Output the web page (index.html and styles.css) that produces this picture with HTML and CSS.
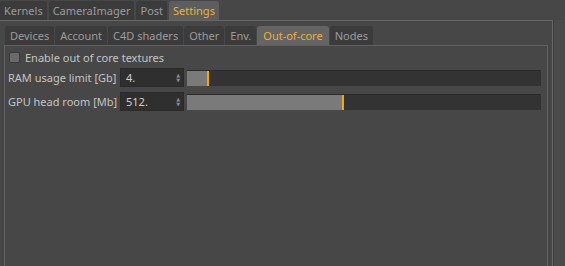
FILE: index.html
```html
<!DOCTYPE html>
<html lang="en">
<head>
	<meta charset="UTF-8">
	<title>Settings - Out-of-core</title>
	<link rel="stylesheet" href="styles.css">
</head>
<body>
	<div class="app">
		<div class="main">
			<div class="tabs">
				<div class="tab">Kernels</div>
				<div class="tab">CameraImager</div>
				<div class="tab">Post</div>
				<div class="tab active">Settings</div>
			</div>
			<div class="frame">
				<div class="subtabs">
					<div class="tab">Devices</div>
					<div class="tab">Account</div>
					<div class="tab">C4D shaders</div>
					<div class="tab">Other</div>
					<div class="tab">Env.</div>
					<div class="tab active">Out-of-core</div>
					<div class="tab">Nodes</div>
				</div>
				<div class="panel">
					<label class="check-row">
						<span class="checkbox"></span>
						Enable out of core textures
					</label>
					<div class="row">
						<span class="label">RAM usage limit [Gb]</span>
						<div class="field">
							<span>4.</span>
							<span class="spin">&#9650;<br>&#9660;</span>
						</div>
						<div class="slider">
							<div class="fill" style="width: 20px"></div>
						</div>
					</div>
					<div class="row">
						<span class="label">GPU head room [Mb]</span>
						<div class="field">
							<span>512.</span>
							<span class="spin">&#9650;<br>&#9660;</span>
						</div>
						<div class="slider">
							<div class="fill" style="width: 155px"></div>
						</div>
					</div>
				</div>
			</div>
		</div>
		<div class="scroll"></div>
	</div>
</body>
</html>
```

FILE: styles.css
```css
body {
	margin: 0;
	background: #474747;
	font-family: "Noto Sans", "DejaVu Sans", sans-serif;
	font-size: 11px;
	color: #c4c4c4;
}

.app { display: flex; width: 565px; height: 266px; overflow: hidden; }

.main { width: 553px; display: flex; flex-direction: column; }

.scroll {
	flex: 1;
	margin-top: 20px;
	border-left: 1px solid #3c3c3c;
	background: #4a4a4a;
}

.tabs { display: flex; gap: 2px; height: 20px; align-items: flex-end; }

.tab {
	height: 19px;
	line-height: 19px;
	padding: 0 4px;
	background: #3b3b3b;
	color: #9c9c9c;
	border-radius: 3px 3px 0 0;
	white-space: nowrap;
}

.tab.active { background: #5d5d5d; color: #f0b030; }

.frame {
	flex: 1;
	border-top: 1px solid #666;
	border-right: 1px solid #666;
	padding: 5px 4px 0 4px;
	display: flex;
	flex-direction: column;
}

.subtabs { display: flex; gap: 1px; height: 19px; padding-left: 1px; }

.subtabs .tab { padding: 0 5px; }
.subtabs .tab.active { background: #646464; padding: 0 6px; }

.panel {
	flex: 1;
	border: 1px solid #606060;
	border-bottom: none;
	padding: 5px 6px 0 2px;
}

.check-row { display: flex; align-items: center; gap: 5px; height: 12px; padding-left: 2px; }

.checkbox {
	width: 9px;
	height: 9px;
	background: #6a6a6a;
	border: 1px solid #3a3a3a;
	border-radius: 2px;
}

.row { display: flex; align-items: center; height: 17px; margin-top: 6px; }
.row + .row { margin-top: 7px; }

.label { width: 112px; padding-left: 1px; white-space: nowrap; }

.field {
	width: 54px;
	height: 17px;
	background: #2f2f2f;
	border: 1px solid #2a2a2a;
	display: flex;
	align-items: center;
	justify-content: space-between;
	padding: 0 3px 0 5px;
	color: #d0d0d0;
}

.spin { font-size: 5px; line-height: 5px; color: #8a8a8a; text-align: center; }

.slider {
	flex: 1;
	height: 15px;
	margin-left: 3px;
	background: #333;
	border-top: 1px solid #2a2a2a;
}

.fill {
	height: 15px;
	background: #7a7a7a;
	border-right: 2px solid #f5a800;
}
```
